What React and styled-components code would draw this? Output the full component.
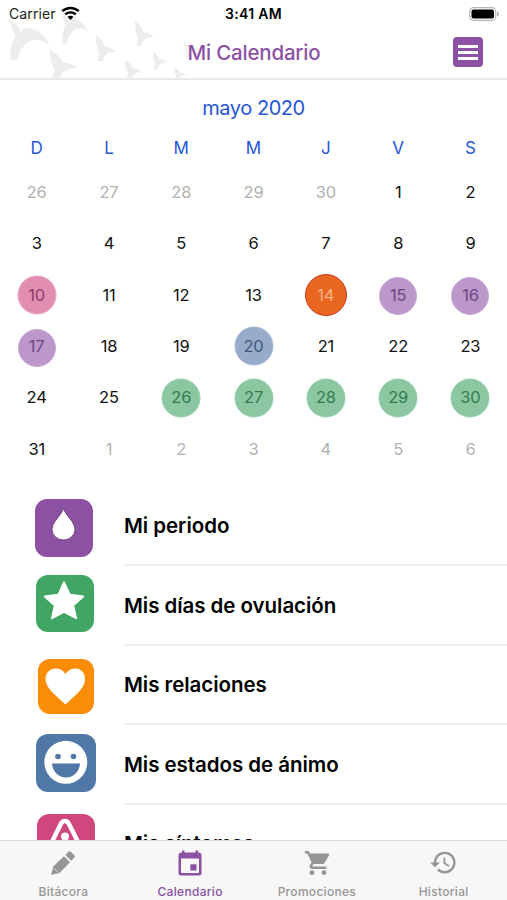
import styled, { createGlobalStyle } from "styled-components";
import { IoMdCart } from "react-icons/io";
import { MdHistory } from "react-icons/md";

const weekdays = ["D", "L", "M", "M", "J", "V", "S"];

const days = [
  ...[26, 27, 28, 29, 30].map((n) => ({ n, muted: true })),
  ...Array.from({ length: 31 }, (_, i) => ({ n: i + 1 })),
  ...[1, 2, 3, 4, 5, 6].map((n) => ({ n, muted: true })),
];

const marks = {
  mood: { bg: "#e28eb0", edge: "#e9a3c0", color: "#8b3f68", size: 39 },
  today: { bg: "#e86620", edge: "#cb3a25", color: "#f9b384", size: 42 },
  period: { bg: "#bb97ca", edge: "#c6a6d3", color: "#6c4684", size: 38, top: 1.5 },
  note: { bg: "#98acca", edge: "#a6b8d2", color: "#41587c", size: 39 },
  ovulation: { bg: "#8bc8a2", edge: "#98d0ac", color: "#347c50", size: 39, top: 0.5 },
};

const markedDays = {
  10: "mood",
  14: "today",
  15: "period",
  16: "period",
  17: "period",
  20: "note",
  26: "ovulation",
  27: "ovulation",
  28: "ovulation",
  29: "ovulation",
  30: "ovulation",
};

const Drop = () => (
  <svg viewBox="0 0 58 58">
    <path
      d="M28.500 9.500C26 17 17 23 17 30.500a11.500 10.500 0 0 0 23 0C40 23 31 17 28.500 9.500z"
      fill="#fff"
      stroke="#73477f"
      strokeWidth="1"
    />
  </svg>
);

const Star = () => (
  <svg viewBox="0 0 58 58">
    <path
      d="M28 7.500l5.800 12.600 13.700 1.700-10.300 9.300 3.200 12.900L28 37.500 15.700 44l3-12.900L8.500 21.800l13.800-1.700z"
      fill="#fff"
      stroke="#fff"
      strokeWidth="2"
      strokeLinejoin="round"
    />
  </svg>
);

const Heart = () => (
  <svg viewBox="0 0 56 55">
    <path
      d="M27.500 45.500C20 38 7.500 30 7.500 20c0-6 4.500-10.500 10-10.500 4.500 0 8 2 10 5.500 2-3.500 5.500-5.500 10-5.500 5.500 0 9.500 4.500 9.500 10.500 0 10-12 18-19.500 25.500z"
      fill="#fff"
    />
  </svg>
);

const Smile = () => (
  <svg viewBox="0 0 60 58">
    <circle cx="29.800" cy="28.300" r="21.500" fill="#fff" />
    <circle cx="22" cy="22.500" r="2.800" fill="#4f77a8" />
    <circle cx="37.500" cy="22.500" r="2.800" fill="#4f77a8" />
    <path d="M16 29.500h28c-.5 8-6.500 14-14 14s-13.500-6-14-14z" fill="#4f77a8" />
  </svg>
);

const Alert = () => (
  <svg viewBox="0 0 58 58">
    <path
      d="M28 7c-2.300 0-3.300 1.300-4.200 3L9 40c-1.500 3 0 6 3 6h32c3 0 4.500-3 3-6L32 10c-.900-1.700-1.700-3-4-3z"
      fill="none"
      stroke="#fff"
      strokeWidth="4.500"
    />
    <circle cx="28" cy="22.500" r="4" fill="#fff" />
    <path d="M28 28v12" stroke="#fff" strokeWidth="4" />
  </svg>
);

const Pencil = () => (
  <svg viewBox="0 0 26 26" width="26" height="26">
    <path
      d="M1.200 24.800l2-8.300L14 6.200l6 6L9.500 22.900zM15.300 4.900l3.200-3.200c.7-.7 1.600-.6 2.300.1l3.500 3.500c.7.700.7 1.600.1 2.300l-3.200 3.200z"
      fill="currentColor"
    />
    <path d="M3.600 17.900l4.500 4.500" stroke="#f7f7f7" strokeWidth=".7" />
  </svg>
);

const CalendarIcon = () => (
  <svg viewBox="0 0 24 26" width="24" height="26" fill="currentColor">
    <path
      fillRule="evenodd"
      d="M3.500 2.500H4V.5h2.500v2h11v-2H20v2h.5a3 3 0 0 1 3 3V23a2.500 2.500 0 0 1-2.500 2.500H3A2.500 2.500 0 0 1 .5 23V5.500a3 3 0 0 1 3-3zM3 8.500v13.700c0 .5.300.8.800.8h16.400c.5 0 .8-.3.8-.8V8.500z"
    />
    <path d="M12.300 14.300h6.200v6.200h-6.200z" />
  </svg>
);

// one big fluke seen up close, the rest reuse the smaller outline
const bigTail =
  "M0 0C2 8 4 12 5 17 1 23 0 30 0 40H8C8 33 12 26 20 21 26 18 33 21 39 24 35 15 28 10 20 8 16 7 13 9 11 12 9 6 4 3 0 0z";
const smallTail =
  "M0 0C5 3 8 8 9 12 13 11 17 14 20 17 13 16 8 19 7 26H1C3 21 4 18 2 15 0 10 0 5 0 0z";

const WhaleTails = () => (
  <svg width="190" height="79" viewBox="0 0 190 79" fill="#ededed">
    <path d={bigTail} transform="translate(10 20)" />
    <path d={bigTail} transform="translate(62 13) scale(.66 .77)" />
    <path d={smallTail} transform="translate(96 35)" />
    <path d={smallTail} transform="translate(50 50) scale(1.450 1.080)" />
    <path d={smallTail} transform="translate(135 21) scale(.95)" />
    <path d={smallTail} transform="translate(153 51) scale(.7)" />
    <path d={smallTail} transform="translate(125 60) scale(.9 .73)" />
    <path d={smallTail} transform="translate(174 67) scale(.65 .46)" />
    <path d="M183 41l7 5v6l-4 9c1-7-1-12-3-20z" opacity=".7" />
  </svg>
);

const Wifi = () => (
  <svg width="19" height="15" viewBox="0 0 19 15" fill="none" stroke="#000">
    <path d="M1.200 5.100C6 .8 13 .8 17.800 5.100" strokeWidth="2.500" />
    <path d="M4.200 8.300c3-2.700 7.600-2.700 10.600 0" strokeWidth="2.300" />
    <path d="M9.500 14l-3-3.100c1.700-1.500 4.300-1.500 6 0z" fill="#000" stroke="none" />
  </svg>
);

const symptoms = [
  { label: "Mi periodo", color: "#8b51a2", icon: Drop, w: 58, h: 58, x: 35, y: 12 },
  { label: "Mis días de ovulación", color: "#41a663", icon: Star, w: 58, h: 57, x: 36, y: 9 },
  { label: "Mis relaciones", color: "#fb8c05", icon: Heart, w: 56, h: 55, x: 38, y: 13 },
  { label: "Mis estados de ánimo", color: "#4f77a8", icon: Smile, w: 60, h: 58, x: 36, y: 9 },
  { label: "Mis síntomas", color: "#cf477c", icon: Alert, w: 58, h: 58, x: 37, y: 9.5 },
];

export default function App() {
  return (
    <>
      <GlobalStyle />
      <Screen>
        <Header>
          <Backdrop>
            <WhaleTails />
          </Backdrop>
          <StatusBar>
            <Carrier>
              Carrier
              <Wifi />
            </Carrier>
            <Clock>3:41 AM</Clock>
            <Battery>
              <svg width="31" height="14" viewBox="0 0 31 14">
                <rect x=".7" y=".7" width="26" height="12.600" rx="3.800" fill="#fff" stroke="#b5b5b5" strokeWidth="1.200" />
                <rect x="2.500" y="2.500" width="22.500" height="9" rx="2" fill="#000" />
                <path d="M28 4.500c2.700.8 2.700 4.200 0 5z" fill="#b5b5b5" />
              </svg>
            </Battery>
          </StatusBar>
          <NavBar>
            <Title>Mi Calendario</Title>
            <MenuButton>
              <span />
              <span />
              <span />
            </MenuButton>
          </NavBar>
        </Header>

        <Calendar>
          <Month>mayo 2020</Month>
          <Weekdays>
            {weekdays.map((d, i) => (
              <span key={i}>{d}</span>
            ))}
          </Weekdays>
          <Days>
            {days.map(({ n, muted }, i) => {
              const mark = muted ? null : marks[markedDays[n]];
              return (
                <Day key={i} $muted={muted} $mark={mark}>
                  <span>{n}</span>
                </Day>
              );
            })}
          </Days>
        </Calendar>

        <List>
          {symptoms.map(({ label, color, icon: Icon, w, h, x, y }) => (
            <Item key={label}>
              <IconSlot $x={x} $y={y}>
                <Tile $color={color} $w={w} $h={h}>
                  <Icon />
                </Tile>
              </IconSlot>
              <Label>{label}</Label>
            </Item>
          ))}
        </List>

        <TabBar>
          <Tab>
            <Pencil />
            <span>Bitácora</span>
          </Tab>
          <Tab $active>
            <CalendarIcon />
            <span>Calendario</span>
          </Tab>
          <Tab>
            <IoMdCart size={30} />
            <span>Promociones</span>
          </Tab>
          <Tab>
            <MdHistory size={29} />
            <span>Historial</span>
          </Tab>
        </TabBar>
      </Screen>
    </>
  );
}

const GlobalStyle = createGlobalStyle`
  *,
  *::before {
    box-sizing: border-box;
  }

  body {
    margin: 0;
    background: #fff;
    font-family: Inter, "Liberation Sans", sans-serif;
    overflow: hidden;
  }
`;

const Screen = styled.div`
  display: flex;
  flex-direction: column;
  width: 507px;
  height: 900px;
  background: #fff;
  overflow: hidden;
`;

const Header = styled.header`
  position: relative;
  flex: none;
  height: 80px;
  border-bottom: 2px solid #e9e9e9;
`;

const Backdrop = styled.div`
  position: absolute;
  top: 0;
  left: 0;
`;

const StatusBar = styled.div`
  position: relative;
  display: grid;
  grid-template-columns: 1fr auto 1fr;
  align-items: center;
  height: 27px;
  padding: 0 7px 0 9px;
`;

const Carrier = styled.div`
  display: flex;
  align-items: center;
  gap: 5px;
  font-size: 14px;
  color: #222;
  letter-spacing: 0.1px;
`;

const Clock = styled.div`
  margin-left: -2px;
  font-size: 14px;
  font-weight: 600;
  letter-spacing: 0.35px;
`;

const Battery = styled.div`
  display: flex;
  justify-content: flex-end;
`;

const NavBar = styled.div`
  position: relative;
  display: grid;
  grid-template-columns: 1fr auto 1fr;
  align-items: center;
  height: 50px;
  padding: 0 24px 0 25px;
`;

const Title = styled.h1`
  grid-column: 2;
  margin: 0;
  font-size: 20.5px;
  font-weight: 500;
  letter-spacing: -0.2px;
  color: #8b51a2;
  white-space: nowrap;
`;

const MenuButton = styled.button`
  justify-self: end;
  display: flex;
  flex-direction: column;
  justify-content: center;
  gap: 3px;
  width: 30px;
  height: 30px;
  padding: 0 5px;
  border: 0;
  border-radius: 4px;
  background: #8b51a2;

  span {
    height: 3px;
    background: #fff;
  }
`;

const Calendar = styled.section`
  flex: none;
  height: 406.5px;
  padding-top: 13.5px;
`;

const Month = styled.h2`
  margin: 0;
  line-height: 28px;
  font-size: 20px;
  font-weight: 400;
  letter-spacing: -0.45px;
  color: #2456d6;
  text-align: center;
`;

const Weekdays = styled.div`
  display: grid;
  grid-template-columns: repeat(7, 72.3px);
  margin-top: 14.5px;
  padding-left: 0.5px;
  line-height: 24px;
  font-size: 17px;
  color: #2456d6;
  text-align: center;
`;

const Days = styled.div`
  display: grid;
  grid-template-columns: repeat(7, 72.3px);
  grid-auto-rows: 51.3px;
  margin-top: 6.5px;
  padding-left: 0.5px;
`;

const Day = styled.div`
  position: relative;
  display: flex;
  align-items: center;
  justify-content: center;
  font-size: 16.5px;
  letter-spacing: -0.2px;
  color: ${({ $muted, $mark }) => ($mark ? $mark.color : $muted ? "#b1b1b1" : "#111")};

  span {
    position: relative;
  }

  &::before {
    content: "";
    display: ${({ $mark }) => ($mark ? "block" : "none")};
    position: absolute;
    top: calc(50% + ${({ $mark }) => $mark?.top || 0}px);
    left: 50%;
    width: ${({ $mark }) => $mark?.size}px;
    height: ${({ $mark }) => $mark?.size}px;
    border: 1.5px solid ${({ $mark }) => $mark?.edge};
    border-radius: 50%;
    background: ${({ $mark }) => $mark?.bg};
    transform: translate(-50%, -50%);
  }
`;

const List = styled.ul`
  flex: 1;
  min-height: 0;
  margin: 0;
  padding: 0;
  list-style: none;
  overflow: hidden;
`;

const Item = styled.li`
  display: flex;
  height: 79.5px;
`;

const IconSlot = styled.div`
  flex: none;
  width: 124px;
  padding: ${({ $x, $y }) => `${$y}px 0 0 ${$x}px`};
`;

const Tile = styled.div`
  width: ${({ $w }) => $w}px;
  height: ${({ $h }) => $h}px;
  border-radius: 12px;
  background: ${({ $color }) => $color};

  svg {
    display: block;
    width: 100%;
    height: 100%;
  }
`;

const Label = styled.div`
  flex: 1;
  display: flex;
  align-items: center;
  padding-top: 1px;
  border-bottom: 2px solid #ededed;
  font-size: 20.5px;
  font-weight: 600;
  letter-spacing: -0.05px;
  color: #000;
`;

const TabBar = styled.nav`
  flex: none;
  display: grid;
  grid-template-columns: repeat(4, 1fr);
  height: 60px;
  border-top: 1px solid #dcdcdc;
  background: #f7f7f7;
`;

const Tab = styled.div`
  display: grid;
  grid-template-rows: 43px 14px;
  align-content: start;
  justify-items: center;
  align-items: center;
  font-size: 12px;
  font-weight: 500;
  letter-spacing: 0.3px;
  color: ${({ $active }) => ($active ? "#8b51a2" : "#959595")};
`;
